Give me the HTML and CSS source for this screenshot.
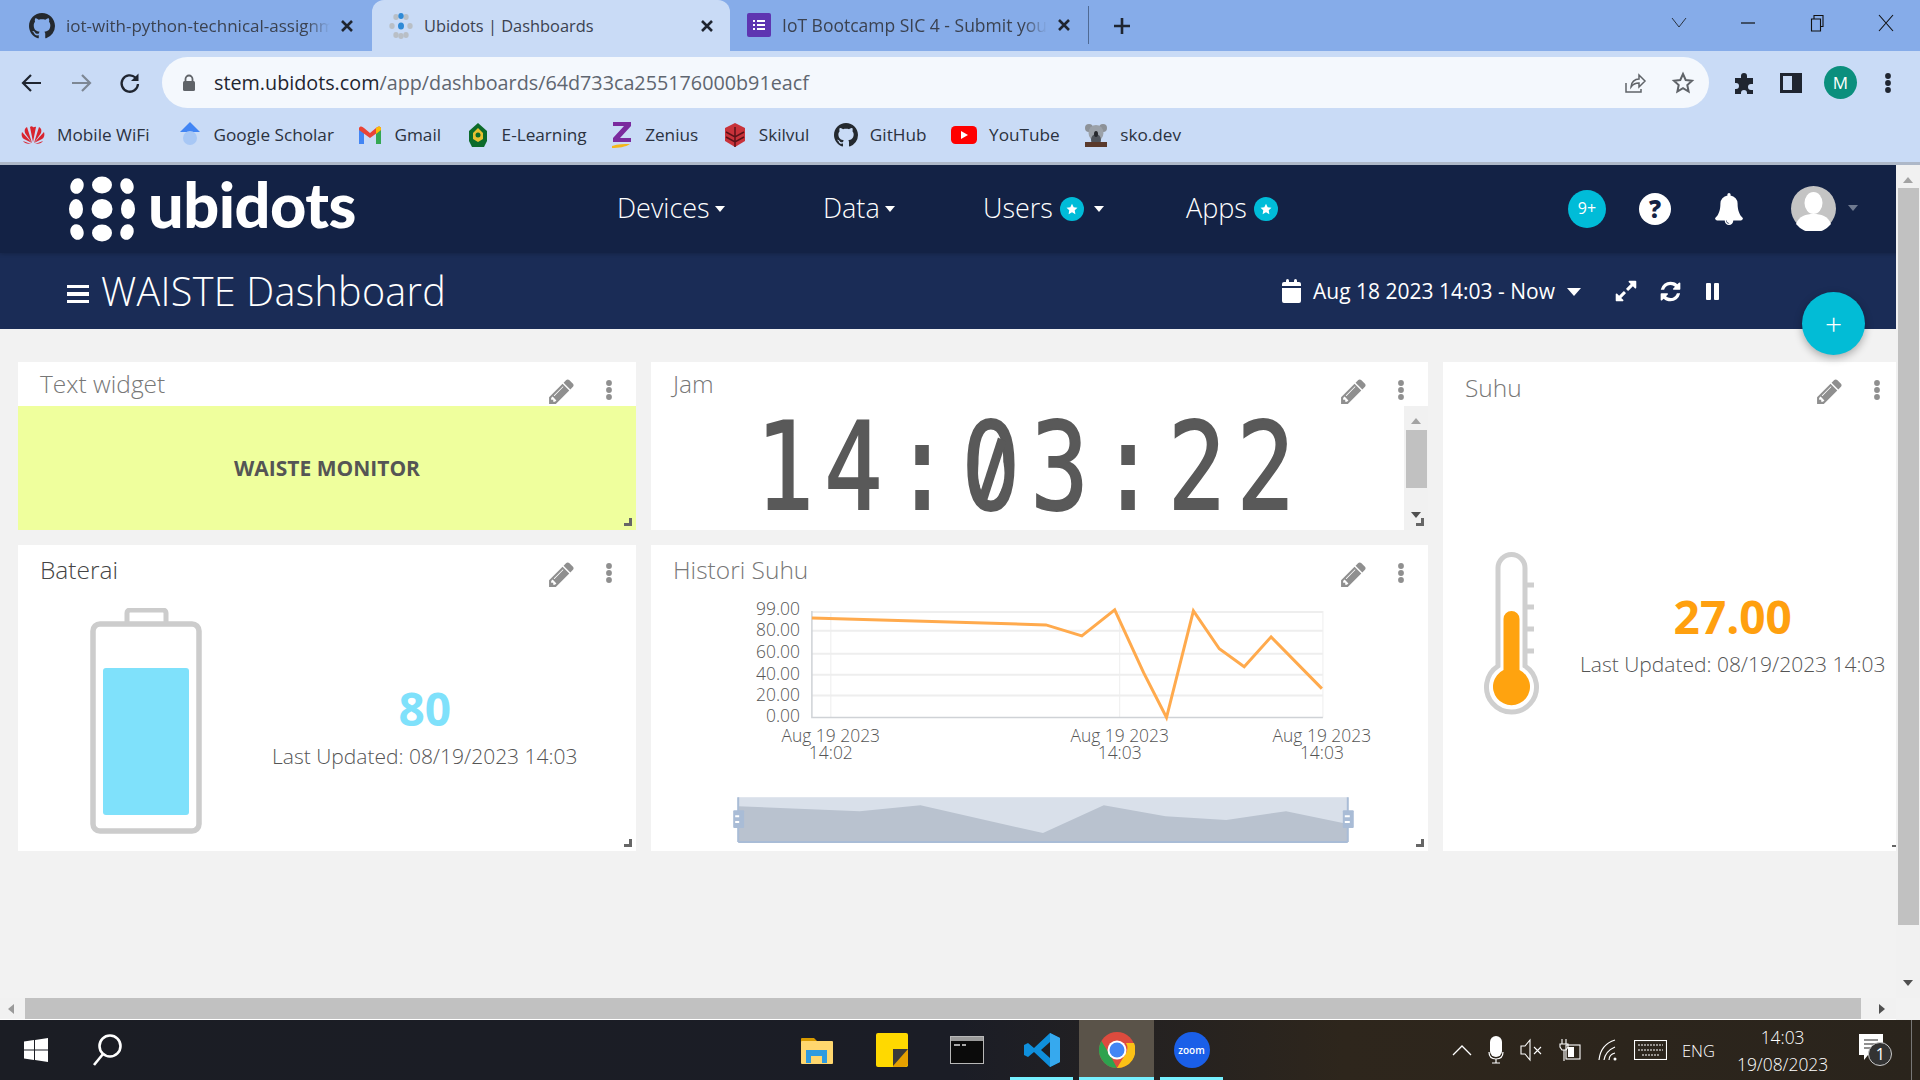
FILE: index.html
```html
<!DOCTYPE html>
<html lang="en">
<head>
    <meta charset="UTF-8">
    <title>Ubidots | Dashboards</title>
    <link rel="stylesheet" href="styles.css">
</head>
<body>
    <svg class="sprite" xmlns="http://www.w3.org/2000/svg">
        <symbol id="i-github" viewBox="0 0 16 16"><path d="M8 0C3.58 0 0 3.58 0 8c0 3.54 2.29 6.53 5.47 7.59.4.07.55-.17.55-.38 0-.19-.01-.82-.01-1.49-2.01.37-2.53-.49-2.69-.94-.09-.23-.48-.94-.82-1.13-.28-.15-.68-.52-.01-.53.63-.01 1.08.58 1.23.82.72 1.21 1.87.87 2.33.66.07-.52.28-.87.51-1.07-1.78-.2-3.64-.89-3.64-3.95 0-.87.31-1.59.82-2.15-.08-.2-.36-1.02.08-2.12 0 0 .67-.21 2.2.82.64-.18 1.32-.27 2-.27.68 0 1.36.09 2 .27 1.53-1.04 2.2-.82 2.2-.82.44 1.1.16 1.92.08 2.12.51.56.82 1.27.82 2.15 0 3.07-1.87 3.75-3.65 3.95.29.25.54.73.54 1.48 0 1.07-.01 1.93-.01 2.2 0 .21.15.46.55.38A8.013 8.013 0 0016 8c0-4.42-3.58-8-8-8z"/></symbol>
        <symbol id="i-pencil" viewBox="0 0 1792 1792"><path d="M491 1536l91-91-235-235-91 91v107h128v128h107zm523-928q0-22-22-22-10 0-17 7l-542 542q-7 7-7 17 0 22 22 22 10 0 17-7l542-542q7-7 7-17zm-54-192l416 416-832 832h-416v-416zm683 96q0 53-37 90l-166 166-416-416 166-165q36-38 90-38 53 0 91 38l235 234q37 39 37 91z"/></symbol>
        <symbol id="i-dots" viewBox="0 0 6 20"><circle cx="3" cy="3" r="2.9"/><circle cx="3" cy="10" r="2.9"/><circle cx="3" cy="17" r="2.9"/></symbol>
        <symbol id="i-close" viewBox="0 0 14 14"><path d="M2 2l10 10M12 2L2 12" fill="none" stroke="currentColor" stroke-width="2.6"/></symbol>
        <symbol id="i-star" viewBox="0 0 24 24"><path d="M12 4l2.5 5.2 5.7.8-4.1 4 1 5.700L12 17l-5.100 2.700 1-5.700-4.100-4 5.700-.8z"/></symbol>
    </svg>

    <header class="tabstrip">
        <div class="tab">
            <svg class="tab-icon" width="26" height="26"><use href="#i-github" fill="#24292f"/></svg>
            <span class="tab-title">iot-with-python-technical-assignment</span>
            <svg class="tab-close" width="14" height="14"><use href="#i-close"/></svg>
        </div>
        <div class="tab tab-active">
            <svg class="tab-icon" width="24" height="26" viewBox="0 0 24 26">
                <g fill="#b9bfc6"><ellipse cx="7" cy="4" rx="2.700" ry="3"/><ellipse cx="17" cy="4" rx="2.700" ry="3"/><ellipse cx="3" cy="13" rx="2.700" ry="3"/><ellipse cx="21" cy="13" rx="2.700" ry="3"/><ellipse cx="7" cy="22" rx="2.700" ry="3"/><ellipse cx="12" cy="23" rx="2.700" ry="3"/><ellipse cx="17" cy="22" rx="2.700" ry="3"/></g>
                <ellipse cx="12" cy="3" rx="2.700" ry="3" fill="#2f8ad6"/><ellipse cx="12" cy="13" rx="3" ry="3.500" fill="#2f8ad6"/>
            </svg>
            <span class="tab-title">Ubidots | Dashboards</span>
            <svg class="tab-close" width="14" height="14"><use href="#i-close"/></svg>
        </div>
        <div class="tab tab-last">
            <svg class="tab-icon" width="24" height="24" viewBox="0 0 24 24">
                <rect width="24" height="24" rx="2" fill="#5e35b1"/>
                <path d="M6 7h2v2H6zM10 7h8v2h-8zM6 11h2v2H6zM10 11h8v2h-8zM6 15h2v2H6zM10 15h8v2h-8z" fill="#fff"/>
            </svg>
            <span class="tab-title">IoT Bootcamp SIC 4 - Submit your assignment</span>
            <svg class="tab-close" width="14" height="14"><use href="#i-close"/></svg>
        </div>
        <div class="tab-new">
            <svg width="20" height="20" viewBox="0 0 20 20"><path d="M10 2v16M2 10h16" stroke="#1f2530" stroke-width="2.600"/></svg>
        </div>
        <div class="window-controls">
            <svg width="18" height="12" viewBox="0 0 18 12"><path d="M2 1l7 9 7-9" fill="none" stroke="#2a3340" stroke-width="1"/></svg>
            <svg width="18" height="12" viewBox="0 0 18 12"><path d="M2 6h14" stroke="#111" stroke-width="1.200"/></svg>
            <svg width="18" height="18" viewBox="0 0 18 18"><path d="M3.500 5h9v12h-9zM6 5V1.500h9v11h-2.500" fill="none" stroke="#111" stroke-width="1.100"/></svg>
            <svg width="18" height="18" viewBox="0 0 18 18"><path d="M2 1l14 16M16 1L2 17" fill="none" stroke="#111" stroke-width="1.100"/></svg>
        </div>
    </header>

    <div class="toolbar">
        <svg class="tool-btn" width="24" height="24" viewBox="0 0 24 24"><path d="M21 12H4M11 4l-8 8 8 8" fill="none" stroke="#1f2530" stroke-width="2.200"/></svg>
        <svg class="tool-btn" width="24" height="24" viewBox="0 0 24 24"><path d="M3 12h17M13 4l8 8-8 8" fill="none" stroke="#7d8794" stroke-width="2.200"/></svg>
        <svg class="tool-btn" width="24" height="24" viewBox="0 0 24 24"><path d="M20 13a8.200 8.200 0 1 1-2.600-6.500" fill="none" stroke="#1f2530" stroke-width="2.300"/><path d="M20.500 2.500v7.500h-7.500z" fill="#1f2530"/></svg>
        <div class="omnibox">
            <svg width="14" height="18" viewBox="0 0 14 18"><path d="M3.500 8V5a3.500 3.500 0 0 1 7 0v3" fill="none" stroke="#5f6368" stroke-width="1.800"/><rect x="1" y="7" width="12" height="10" rx="1.500" fill="#5f6368"/></svg>
            <span class="url"><b>stem.ubidots.com</b>/app/dashboards/64d733ca255176000b91eacf</span>
            <svg class="omni-share" width="24" height="24" viewBox="0 0 24 24"><path d="M3 12v9h15v-3M8 16c0-5 4-8 8-8V4l6 6-6 6v-4c-3 0-6 1-8 4z" fill="none" stroke="#5f6368" stroke-width="1.500"/></svg>
            <svg width="24" height="24" viewBox="0 0 24 24"><path d="M12 3l2.700 6 6.300.7-4.700 4.300 1.300 6.500L12 17.200 6.400 20.500 7.700 14 3 9.700 9.300 9z" fill="none" stroke="#5f6368" stroke-width="2"/></svg>
        </div>
        <div class="toolbar-end">
            <svg width="24" height="24" viewBox="0 0 24 24"><path d="M2 7h6V5a3 3 0 0 1 6 0v2h6v6h-2a3 3 0 0 0 0 6h2v4h-6v-1a3 3 0 0 0-6 0v1H2v-5h1a3 3 0 0 0 0-6H2z" fill="#1f2530"/></svg>
            <svg class="panel-icon" width="22" height="20" viewBox="0 0 22 20"><path d="M1.500 1.500h19v17h-19z" fill="none" stroke="#1f2530" stroke-width="3"/><rect x="12" y="1" width="9" height="18" fill="#1f2530"/></svg>
            <span class="profile">M</span>
            <svg width="6" height="20" viewBox="0 0 6 20"><use href="#i-dots" fill="#1f2530"/></svg>
        </div>
    </div>

    <nav class="bookmarks">
        <a class="bm">
            <svg width="24" height="20" viewBox="0 0 24 20"><g fill="#d9232e"><path d="M11 18L6 2c-2 1-3 3-2 6z"/><path d="M13 18l5-16c2 1 3 3 2 6z"/><path d="M11 18L1 7c-1 3 0 6 2 7z"/><path d="M13 18l10-11c1 3 0 6-2 7z"/><path d="M10 19l-8-3c1 2 4 3 8 3z"/><path d="M14 19l8-3c-1 2-4 3-8 3z"/><path d="M12 17L9 2c1-1 2-1 3 0s2-1 3 0z"/></g></svg>
            Mobile WiFi
        </a>
        <a class="bm">
            <svg width="24" height="28" viewBox="0 0 24 28"><path d="M12 1L22 11H2z" fill="#4285f4"/><circle cx="12" cy="17" r="7" fill="#a7c7f5"/></svg>
            Google Scholar
        </a>
        <a class="bm">
            <svg width="24" height="20" viewBox="0 0 24 20"><path d="M1 19V3l5 4v12z" fill="#4285f4"/><path d="M23 19V3l-5 4v12z" fill="#34a853"/><path d="M1 3c1-2 3-2 5 0l6 5 6-5c2-2 4-2 5 0v2l-11 8L1 5z" fill="#ea4335"/><path d="M18 3c2-2 4-2 5 0v2l-5 4z" fill="#fbbc04"/></svg>
            Gmail
        </a>
        <a class="bm">
            <svg width="24" height="26" viewBox="0 0 24 26"><path d="M12 1l9 8v10l-3 6H6l-3-6V9z" fill="#0c6b2a"/><path d="M12 6l5 5v6l-5 3-5-3v-6z" fill="#e8c030"/><circle cx="12" cy="13" r="2.500" fill="#0c6b2a"/></svg>
            E-Learning
        </a>
        <a class="bm">
            <svg width="22" height="28" viewBox="0 0 22 28"><path d="M2 1h18v4L9 17h11v4H2v-4L13 5H2z" fill="#7b2a9e"/><path d="M1 25c6-2 12-2 18-2-4 3-12 4-18 4z" fill="#f5b61a"/></svg>
            Zenius
        </a>
        <a class="bm">
            <svg width="24" height="26" viewBox="0 0 24 26"><path d="M12 1l10 5v13l-10 6-10-6V6z" fill="#c8323a"/><path d="M3 10l9 5 9-5M3 15l9 5 9-5M12 5v20" fill="none" stroke="#5b1218" stroke-width="1.500"/></svg>
            Skilvul
        </a>
        <a class="bm">
            <svg width="24" height="24"><use href="#i-github" fill="#24292f"/></svg>
            GitHub
        </a>
        <a class="bm">
            <svg width="26" height="18" viewBox="0 0 26 18"><rect width="26" height="18" rx="4.500" fill="#f00"/><path d="M10 5l7 4-7 4z" fill="#fff"/></svg>
            YouTube
        </a>
        <a class="bm">
            <svg width="24" height="26" viewBox="0 0 24 26"><circle cx="5" cy="6" r="4" fill="#8d9298"/><circle cx="19" cy="6" r="4" fill="#8d9298"/><ellipse cx="12" cy="11" rx="7.500" ry="8" fill="#9ba1a8"/><ellipse cx="12" cy="18" rx="5" ry="6" fill="#50555c"/><rect x="1" y="20" width="22" height="5" fill="#5a3a2c"/><ellipse cx="12" cy="12" rx="2" ry="3" fill="#26282c"/></svg>
            sko.dev
        </a>
    </nav>

    <div class="viewport">
        <div class="page">
            <div class="topnav">
                <div class="brand">
                    <svg width="66" height="66" viewBox="0 0 66 66" fill="#fff">
                        <ellipse cx="8" cy="10" rx="6.500" ry="8" transform="rotate(20 8 10)"/><ellipse cx="33" cy="9" rx="10" ry="8.500"/><ellipse cx="58" cy="10" rx="6.500" ry="8" transform="rotate(-20 58 10)"/>
                        <ellipse cx="7" cy="33" rx="7" ry="10"/><ellipse cx="33" cy="33" rx="10.500" ry="10"/><ellipse cx="59" cy="33" rx="7" ry="10"/>
                        <ellipse cx="8" cy="56" rx="6.500" ry="8" transform="rotate(-20 8 56)"/><ellipse cx="33" cy="57" rx="10" ry="8.500"/><ellipse cx="58" cy="56" rx="6.500" ry="8" transform="rotate(20 58 56)"/>
                    </svg>
                    <span class="brand-name">ubidots</span>
                </div>
                <ul class="menu">
                    <li>Devices<i class="caret"></i></li>
                    <li>Data<i class="caret"></i></li>
                    <li>Users<span class="star"><svg width="16" height="16"><use href="#i-star" fill="#fff"/></svg></span><i class="caret caret-far"></i></li>
                    <li>Apps<span class="star"><svg width="16" height="16"><use href="#i-star" fill="#fff"/></svg></span></li>
                </ul>
                <div class="nav-right">
                    <span class="notif-count">9+</span>
                    <span class="help">?</span>
                    <svg class="bell" width="30" height="32" viewBox="0 0 1792 1792" preserveAspectRatio="none"><path fill="#fff" d="M912 1696q0-16-16-16-59 0-101.500-42.500t-42.500-101.500q0-16-16-16t-16 16q0 73 51.500 124.500t124.500 51.500q16 0 16-16zm816-288q0 52-38 90t-90 38h-448q0 106-75 181t-181 75-181-75-75-181h-448q-52 0-90-38t-38-90q50-42 91-88t85-119.500 74.500-158.500 50-206 19.500-260q0-152 117-282.500t307-158.500q-8-19-8-39 0-40 28-68t68-28 68 28 28 68q0 20-8 39 190 28 307 158.500t117 282.500q0 139 19.500 260t50 206 74.500 158.500 85 119.500 91 88z"/></svg>
                    <span class="user">
                        <svg width="45" height="45" viewBox="0 0 45 45"><circle cx="22.500" cy="22.500" r="22.500" fill="#c4c4c4"/><ellipse cx="22.500" cy="17" rx="9" ry="11" fill="#fff"/><path d="M5 38c3-8 10-10 17.500-10S37 30 40 38a22.500 22.500 0 0 1-35 0z" fill="#fff"/></svg>
                        <i class="caret caret-grey"></i>
                    </span>
                </div>
            </div>

            <div class="subnav">
                <div class="burger"><i></i><i></i><i></i></div>
                <h1 class="dash-title">WAISTE Dashboard</h1>
                <div class="dash-tools">
                    <svg class="cal" width="19" height="24" viewBox="0 0 19 24"><path d="M0 5a2 2 0 0 1 2-2h15a2 2 0 0 1 2 2v2H0zM0 9h19v13a2 2 0 0 1-2 2H2a2 2 0 0 1-2-2z" fill="#fff"/><rect x="4" y="0" width="3" height="6" rx="1.500" fill="#fff"/><rect x="12" y="0" width="3" height="6" rx="1.500" fill="#fff"/></svg>
                    <span class="range">Aug 18 2023 14:03 - Now</span>
                    <i class="caret caret-big"></i>
                    <svg class="t-expand" width="24" height="24" viewBox="0 0 1792 1792"><path fill="#fff" d="M883 1056q0 13-10 23l-332 332 144 144q19 19 19 45t-19 45-45 19h-448q-26 0-45-19t-19-45v-448q0-26 19-45t45-19 45 19l144 144 332-332q10-10 23-10t23 10l114 114q10 10 10 23zm781-864v448q0 26-19 45t-45 19-45-19l-144-144-332 332q-10 10-23 10t-23-10l-114-114q-10-10-10-23t10-23l332-332-144-144q-19-19-19-45t19-45 45-19h448q26 0 45 19t19 45z"/></svg>
                    <svg class="t-refresh" width="23" height="23" viewBox="0 0 1792 1792"><path fill="#fff" d="M1639 1056q0 5-1 7-64 268-268 434.500t-478 166.500q-146 0-282.500-55t-243.500-157l-129 129q-19 19-45 19t-45-19-19-45v-448q0-26 19-45t45-19h448q26 0 45 19t19 45-19 45l-137 137q71 66 161 102t187 36q134 0 250-65t186-179q11-17 53-117 8-23 30-23h192q13 0 22.500 9.500t9.500 22.500zm25-800v448q0 26-19 45t-45 19h-448q-26 0-45-19t-19-45 19-45l138-138q-148-137-349-137-134 0-250 65t-186 179q-11 17-53 117-8 23-30 23h-199q-13 0-22.500-9.500t-9.500-22.500v-7q65-268 270-434.500t480-166.500q146 0 284 55.500t245 156.500l130-129q19-19 45-19t45 19 19 45z"/></svg>
                    <span class="t-pause"><i></i><i></i></span>
                </div>
            </div>

            <button class="fab">+</button>

            <main class="board">
                <section class="card card-text">
                    <div class="card-head">
                        <h2 class="card-title">Text widget</h2>
                        <svg class="act-pencil" width="29" height="29"><use href="#i-pencil"/></svg>
                        <svg class="act-dots" width="6" height="20"><use href="#i-dots"/></svg>
                    </div>
                    <div class="text-body">WAISTE MONITOR</div>
                    <i class="resize"></i>
                </section>

                <section class="card card-clock">
                    <div class="card-head">
                        <h2 class="card-title">Jam</h2>
                        <svg class="act-pencil" width="29" height="29"><use href="#i-pencil"/></svg>
                        <svg class="act-dots" width="6" height="20"><use href="#i-dots"/></svg>
                    </div>
                    <div class="clock-body">
                        <div class="clock"><span class="clock-digits">14:<span class="zero">0</span>3:22</span></div>
                        <div class="mini-scroll">
                            <i class="arrow-up"></i>
                            <i class="mini-thumb"></i>
                            <i class="arrow-down"></i>
                        </div>
                    </div>
                    <i class="resize"></i>
                </section>

                <section class="card card-temp">
                    <div class="card-head card-head-low">
                        <h2 class="card-title">Suhu</h2>
                        <svg class="act-pencil" width="29" height="29"><use href="#i-pencil"/></svg>
                        <svg class="act-dots" width="6" height="20"><use href="#i-dots"/></svg>
                    </div>
                    <div class="metric metric-temp">
                        <svg width="58" height="168" viewBox="0 0 58 168">
                            <path d="M15 118V20a13.500 13.500 0 0 1 27 0v98a25 25 0 1 1-27 0z" fill="#fff" stroke="#cfcfcf" stroke-width="5"/>
                            <path d="M43 37h8M43 59h8M43 81h8M43 103h8" stroke="#cfcfcf" stroke-width="5"/>
                            <path d="M20.500 122V71a8 8 0 0 1 16 0v51a18.500 18.500 0 1 1-16 0z" fill="#ffa30f"/>
                        </svg>
                        <div class="reading">
                            <div class="value value-orange">27.00</div>
                            <div class="updated">Last Updated: 08/19/2023 14:03</div>
                        </div>
                    </div>
                    <i class="resize resize-small"></i>
                </section>

                <section class="card card-battery">
                    <div class="card-head">
                        <h2 class="card-title card-title-dark">Baterai</h2>
                        <svg class="act-pencil" width="29" height="29"><use href="#i-pencil"/></svg>
                        <svg class="act-dots" width="6" height="20"><use href="#i-dots"/></svg>
                    </div>
                    <div class="metric metric-battery">
                        <svg width="112" height="226" viewBox="0 0 112 226">
                            <path d="M37 16V5a3 3 0 0 1 3-3h33a3 3 0 0 1 3 3v11" fill="none" stroke="#ccc" stroke-width="5"/>
                            <rect x="3" y="16" width="106" height="207" rx="7" fill="#fff" stroke="#ccc" stroke-width="5.500"/>
                            <rect x="13" y="60" width="86" height="147" rx="3" fill="#7fe1fb"/>
                        </svg>
                        <div class="reading">
                            <div class="value value-blue">80</div>
                            <div class="updated">Last Updated: 08/19/2023 14:03</div>
                        </div>
                    </div>
                    <i class="resize"></i>
                </section>

                <section class="card card-chart">
                    <div class="card-head">
                        <h2 class="card-title">Histori Suhu</h2>
                        <svg class="act-pencil" width="29" height="29"><use href="#i-pencil"/></svg>
                        <svg class="act-dots" width="6" height="20"><use href="#i-dots"/></svg>
                    </div>
                    <svg class="chart" width="776" height="256" viewBox="651 595 776 256">
                        <g stroke="#eeeeee" stroke-width="2">
                            <path d="M811 611h513M811 630h513M811 653h513M811 674h513M811 695h513"/>
                            <path d="M830 610v107M1120 610v107M1324 610v107" stroke-width="1"/>
                        </g>
                        <path d="M811 610v107h513" fill="none" stroke="#cfd2d6" stroke-width="1.500"/>
                        <g class="axis-y" text-anchor="end">
                            <text x="799" y="614">99.00</text>
                            <text x="799" y="635">80.00</text>
                            <text x="799" y="657">60.00</text>
                            <text x="799" y="679">40.00</text>
                            <text x="799" y="700">20.00</text>
                            <text x="799" y="722">0.00</text>
                        </g>
                        <g class="axis-x" text-anchor="middle">
                            <text x="830" y="742">Aug 19 2023</text><text x="830" y="759">14:02</text>
                            <text x="1120" y="742">Aug 19 2023</text><text x="1120" y="759">14:03</text>
                            <text x="1323" y="742">Aug 19 2023</text><text x="1323" y="759">14:03</text>
                        </g>
                        <polyline points="811,617 1046,624 1082,635 1115,609 1144,672 1167,717 1194,610 1220,648 1245,666 1272,636 1323,688" fill="none" stroke="#ffaa4d" stroke-width="3"/>
                        <rect x="737" y="797" width="612" height="45" fill="#d9e0ea"/>
                        <polygon points="737,806 859,811 920,805 1043,833 1104,805 1166,816 1227,820 1287,811 1349,824 1349,841 737,841" fill="#b9c2cf"/>
                        <path d="M737 797v45M1349 797v45M737 842h612" stroke="#a9bcd6" stroke-width="2" fill="none"/>
                        <g>
                            <rect x="732" y="810" width="11" height="18" rx="1" fill="#a9bcd6"/><path d="M734 816h4M734 822h4" stroke="#fff" stroke-width="2"/>
                            <rect x="1344" y="810" width="11" height="18" rx="1" fill="#a9bcd6"/><path d="M1346 816h5M1346 822h5" stroke="#fff" stroke-width="2"/>
                        </g>
                    </svg>
                    <i class="resize"></i>
                </section>
            </main>
        </div>

        <div class="vscroll">
            <i class="arrow-up"></i>
            <i class="vthumb"></i>
            <i class="arrow-down"></i>
        </div>
        <div class="hscroll">
            <i class="arrow-left"></i>
            <i class="hthumb"></i>
            <i class="arrow-right"></i>
        </div>
    </div>

    <footer class="taskbar">
        <div class="task-start">
            <svg width="24" height="24" viewBox="0 0 24 24" fill="#fff"><path d="M0 3.500l10-1.400v9.400H0zM11 2l13-2v11.500H11zM0 12.500h10v9.400L0 20.500zM11 12.500h13V24l-13-2z"/></svg>
            <svg width="32" height="34" viewBox="0 0 32 34"><circle cx="19" cy="13" r="10.500" fill="none" stroke="#fff" stroke-width="2.600"/><path d="M12 21L3 32" stroke="#fff" stroke-width="2.600"/></svg>
        </div>
        <div class="task-apps">
            <span class="app">
                <svg width="32" height="28" viewBox="0 0 32 28"><path d="M0 3a1 1 0 0 1 1-1h12l3 3v4H0z" fill="#d89a00"/><rect y="5" width="32" height="23" rx="1" fill="#ffd76e"/><path d="M5 27V14h21v13h-5v-7h-11v7z" fill="#2f9be0"/></svg>
            </span>
            <span class="app">
                <svg width="32" height="34" viewBox="0 0 32 34"><rect width="32" height="34" rx="2" fill="#ffd900"/><path d="M17 16h15v14a4 4 0 0 1-4 4H17z" fill="#e5a000"/><path d="M17 33V16h15z" fill="#3a3a3a"/></svg>
            </span>
            <span class="app">
                <svg width="34" height="28" viewBox="0 0 34 28"><rect x=".5" y=".5" width="33" height="27" fill="#0b0b0b" stroke="#b8b8b8"/><rect x="1" y="1" width="32" height="4" fill="#9a9a9a"/><path d="M4 9h6M12 9h4" stroke="#ddd" stroke-width="1.500"/></svg>
            </span>
            <span class="app app-open">
                <svg width="36" height="36" viewBox="0 0 36 36"><path d="M26 1l10 5v24l-10 5-16-15-6 5-4-2V13l4-2 6 5zM26 10l-9 8 9 8z" fill="#0f8fdc"/><path d="M26 1l10 5v24l-10 5z" fill="#36a9ee"/></svg>
            </span>
            <span class="app app-open app-active">
                <svg width="36" height="36" viewBox="0 0 36 36"><circle cx="18" cy="18" r="18" fill="#dd4b3e"/><path d="M18 36A18 18 0 0 1 2.400 9L11 23z" fill="#2ea24f"/><path d="M18 36l9-15a10 10 0 0 0 0-10h8a18 18 0 0 1-17 25z" fill="#fbc116"/><circle cx="18" cy="18" r="9.500" fill="#fff"/><circle cx="18" cy="18" r="7.500" fill="#4285f4"/></svg>
            </span>
            <span class="app app-open">
                <span class="zoom-badge">zoom</span>
            </span>
        </div>
        <div class="tray">
            <svg class="tray-chevron" width="20" height="12" viewBox="0 0 20 12"><path d="M1 11l9-9 9 9" fill="none" stroke="#fff" stroke-width="1.300"/></svg>
            <svg width="16" height="28" viewBox="0 0 16 28"><rect x="2" y="0" width="12" height="21" rx="6" fill="#fff"/><path d="M1 16c0 5 3 7 7 7s7-2 7-7M8 23v4M4 27h8" fill="none" stroke="#fff" stroke-width="1.200"/></svg>
            <svg width="22" height="24" viewBox="0 0 22 24"><path d="M1 8h4l5-6v20l-5-6H1zM14 9l7 7M21 9l-7 7" fill="none" stroke="#fff" stroke-width="1.100"/></svg>
            <svg width="24" height="22" viewBox="0 0 24 22"><path d="M4 0v5M8 0v5M2 5h8v3l-2 3H4L2 8zM6 11v11" fill="none" stroke="#fff" stroke-width="1.100"/><rect x="8" y="6" width="14" height="14" fill="none" stroke="#fff" stroke-width="1.100"/><rect x="10" y="8" width="6" height="10" fill="#fff"/></svg>
            <svg width="20" height="22" viewBox="0 0 20 22"><path d="M1 21C2 12 7 4 17 1M6 21c1-6 4-10 11-13M11 21c0-3 2-6 6-7" fill="none" stroke="#fff" stroke-width="1.200"/><circle cx="17" cy="20" r="1.500" fill="#fff"/></svg>
            <svg width="33" height="20" viewBox="0 0 33 20"><rect x=".5" y=".5" width="32" height="19" fill="none" stroke="#fff" stroke-width="1.100"/><path d="M4 5h25M4 10h25M8 15h17" stroke="#fff" stroke-width="1.100" stroke-dasharray="2 1"/></svg>
            <span class="lang">ENG</span>
            <span class="clock-tray"><span>14:03</span><span>19/08/2023</span></span>
            <span class="action-center">
                <svg width="26" height="30" viewBox="0 0 26 30"><path d="M1 1h24v21H10l-4 5v-5H1z" fill="#fff"/><path d="M6 7h14M6 11h14M6 15h14" stroke="#222" stroke-width="1.200"/></svg>
                <span class="action-count">1</span>
            </span>
        </div>
    </footer>
</body>
</html>
```

FILE: styles.css
```css
* {
    box-sizing: border-box;
}

html, body {
    margin: 0;
    height: 1080px;
    overflow: hidden;
}

body {
    width: 1920px;
    display: flex;
    flex-direction: column;
    font-family: "Open Sans", "Liberation Sans", sans-serif;
    background: #f2f2f2;
}

.sprite {
    display: none;
}

i {
    display: block;
}

/* browser chrome */

.tabstrip {
    height: 51px;
    flex: none;
    display: flex;
    background: #86ace9;
    position: relative;
}

.tab {
    width: 372px;
    display: flex;
    align-items: center;
    padding: 0 18px 0 29px;
    color: #1f2530;
    font-size: 17px;
}

.tab-active {
    width: 358px;
    padding: 0 16px 0 17px;
    background: #c9dbf6;
    border-radius: 12px 12px 0 0;
    font-size: 16.400px;
}

.tab-last {
    width: 359px;
    padding: 0 17px 0 17px;
    border-right: 1px solid #4f6a94;
    margin: 6px 0 7px;
    height: 38px;
    font-size: 17.500px;
}

.tab-icon {
    flex: none;
    margin-right: 11px;
}

.tab-title {
    flex: 1;
    overflow: hidden;
    white-space: nowrap;
    color: #3b4250;
    -webkit-mask-image: linear-gradient(to left, transparent 0, #000 24px);
    mask-image: linear-gradient(to left, transparent 0, #000 24px);
}

.tab-active .tab-title {
    -webkit-mask-image: none;
    mask-image: none;
}

.tab-close {
    flex: none;
    margin-left: 10px;
    color: #1f2530;
}

.tab-new {
    width: 66px;
    display: flex;
    align-items: center;
    justify-content: center;
}

.window-controls {
    margin-left: auto;
    width: 260px;
    display: flex;
    align-items: center;
    justify-content: space-between;
    padding: 0 25px 6px 10px;
}

.toolbar {
    height: 57px;
    flex: none;
    display: flex;
    align-items: center;
    padding: 6px 0 0 20px;
    background: #c9dbf6;
}

.tool-btn {
    flex: none;
    margin-right: 25px;
}

.tool-btn:nth-child(3) {
    margin-right: 21px;
}

.omnibox {
    width: 1547px;
    height: 51px;
    display: flex;
    align-items: center;
    padding: 0 14px 0 20px;
    gap: 32px;
    background: #f4f8fd;
    border-radius: 26px;
    margin-left: -1px;
}

.url {
    flex: 1;
    margin-left: -14px;
    font-size: 19.750px;
    color: #5f6670;
    white-space: nowrap;
}

.url b {
    font-weight: 400;
    color: #1f2530;
}

.omni-share {
    margin-right: -8px;
}

.toolbar-end {
    flex: 1;
    display: flex;
    align-items: center;
    padding-left: 24px;
    gap: 28px;
}

.panel-icon {
    margin-left: -5px;
}

.profile {
    width: 33px;
    height: 33px;
    margin: 0 0 0 -6px;
    border-radius: 50%;
    background: #0b8f7d;
    color: #fff;
    font-size: 17px;
    line-height: 33px;
    text-align: center;
}

.bookmarks {
    height: 57px;
    flex: none;
    display: flex;
    align-items: center;
    padding: 0 0 1px 21px;
    background: #c9dbf6;
    border-bottom: 3px solid #aeb8c8;
}

.bm {
    display: flex;
    align-items: center;
    gap: 12px;
    font-size: 17.200px;
    color: #2b3240;
    white-space: nowrap;
    margin-right: 24.500px;
}

.bm:first-child {
    margin-right: 28px;
}

/* ubidots page */

.viewport {
    flex: 1;
    position: relative;
    overflow: hidden;
}

.page {
    height: 100%;
    background: #f2f2f2;
    position: relative;
}

.topnav {
    height: 88px;
    display: flex;
    align-items: center;
    background: #132245;
    box-shadow: 0 1px 4px rgba(0, 0, 0, 0.2);
    position: relative;
    color: #fff;
    padding-left: 69px;
}

.brand {
    width: 548px;
    display: flex;
    align-items: center;
    gap: 13px;
}

.brand-name {
    font-family: Lato, "Open Sans", sans-serif;
    font-size: 63px;
    font-weight: 900;
    line-height: 60px;
    letter-spacing: -0.5px;
    margin-top: -11px;
}

.menu {
    list-style: none;
    margin: -4px 0 0;
    padding: 0;
    display: grid;
    grid-template-columns: 206px 160px 203px 110px;
    font-size: 27px;
    font-weight: 300;
}

.menu li {
    display: flex;
    align-items: center;
}

.caret {
    width: 0;
    height: 0;
    margin: 4px 0 0 5px;
    border-left: 5px solid transparent;
    border-right: 5px solid transparent;
    border-top: 6px solid #fff;
}

.caret-far {
    margin-left: 10px;
}

.caret-grey {
    border-top-color: #6f7a90;
    margin: 0;
}

.caret-big {
    margin: 2px 0 0 12px;
    border-left-width: 7px;
    border-right-width: 7px;
    border-top-width: 8px;
}

.star {
    width: 24px;
    height: 24px;
    margin-left: 7px;
    margin-top: 3px;
    border-radius: 50%;
    background: #00bcd8;
    display: flex;
    align-items: center;
    justify-content: center;
}

.nav-right {
    position: absolute;
    left: 1568px;
    top: 21px;
    display: flex;
    align-items: center;
    gap: 32px;
    height: 46px;
}

.notif-count {
    width: 38px;
    height: 38px;
    border-radius: 50%;
    background: #00bcd8;
    font-size: 16px;
    line-height: 36px;
    text-align: center;
}

.help {
    width: 32px;
    height: 32px;
    margin-left: 1px;
    border-radius: 50%;
    background: #fff;
    color: #132245;
    font-size: 24px;
    font-weight: 800;
    line-height: 32px;
    text-align: center;
}

.bell {
    margin-left: 11px;
}

.user {
    display: flex;
    align-items: center;
    gap: 12px;
    margin: -2px 0 0 15px;
}

.subnav {
    height: 76px;
    display: flex;
    align-items: center;
    background: #1a2c56;
    color: #fff;
    padding: 0 201px 0 67px;
}

.burger {
    width: 22px;
    display: flex;
    flex-direction: column;
    gap: 4px;
    margin: 6px 12px 0 0;
}

.burger i {
    height: 3.500px;
    background: #fff;
}

.dash-title {
    margin: 0;
    font-size: 39.500px;
    font-weight: 300;
    letter-spacing: 0.3px;
}

.dash-tools {
    margin-left: auto;
    display: flex;
    align-items: center;
}

.range {
    margin-left: 12px;
    font-size: 21px;
}

.t-expand {
    margin-left: 33px;
}

.t-refresh {
    margin-left: 21px;
}

.t-pause {
    margin-left: 24px;
    display: flex;
    gap: 3px;
}

.t-pause i {
    width: 5px;
    height: 17px;
    background: #fff;
    border-radius: 1px;
}

.fab {
    position: absolute;
    left: 1802px;
    top: 127px;
    z-index: 3;
    width: 63px;
    height: 63px;
    border: 0;
    border-radius: 50%;
    background: #02bcd6;
    color: #fff;
    font: 300 30px/60px "Open Sans", sans-serif;
    padding: 0;
    box-shadow: 0 3px 8px rgba(0, 0, 0, 0.3);
}

.board {
    display: grid;
    grid-template-columns: 618px 777px 453px;
    grid-template-rows: 168px 306px;
    gap: 15px;
    padding: 33px 0 0 18px;
}

.card {
    background: #fff;
    position: relative;
    display: flex;
    flex-direction: column;
}

.card-temp {
    grid-column: 3;
    grid-row: 1 / span 2;
}

.card-battery {
    grid-column: 1;
    grid-row: 2;
}

.card-chart {
    grid-column: 2;
    grid-row: 2;
}

.card-head {
    height: 44px;
    flex: none;
    display: flex;
    align-items: flex-start;
    padding: 6px 24px 0 22px;
}

.card-head-low {
    padding-right: 16px;
}

.card-title {
    margin: 0 auto 0 0;
    font-size: 24.500px;
    font-weight: 300;
    line-height: 32px;
    color: #777;
}

.card-head-low .card-title,
.card-battery .card-title,
.card-chart .card-title {
    margin-top: 3px;
}

.card-head-low .card-title {
    margin-top: 4px;
}

.card-title-dark {
    color: #444;
}

.act-pencil {
    fill: #8f8f8f;
    margin: 9px 30px 0 0;
}

.act-dots {
    fill: #8f8f8f;
    margin-top: 12px;
}

.text-body {
    flex: 1;
    display: flex;
    align-items: center;
    justify-content: center;
    background: #efff9d;
    color: #555;
    font-size: 21px;
    font-weight: 700;
}

.resize {
    position: absolute;
    right: 4px;
    bottom: 4px;
    width: 8px;
    height: 8px;
    border-right: 3px solid #666;
    border-bottom: 3px solid #666;
}

.resize-small {
    width: 4px;
    height: 3px;
    border-width: 0 0 2px 3px;
    right: 0;
}

.clock-body {
    flex: 1;
    display: flex;
    min-height: 0;
}

.clock {
    flex: 1;
    display: flex;
    align-items: center;
    justify-content: center;
    color: #595959;
    font-family: "DejaVu Sans Mono", monospace;
}

.clock-digits {
    display: block;
    font-size: 121px;
    line-height: 124px;
    letter-spacing: 13px;
    -webkit-text-stroke: 2px #595959;
    transform: scaleX(0.8);
    margin-left: 6px;
}

.zero {
    display: inline-block;
    position: relative;
}

/* dejavu dots its zero, the reference slashes it */
.zero::before {
    content: "";
    position: absolute;
    left: 20px;
    top: 42px;
    width: 33px;
    height: 50px;
    background: #fff;
    border-radius: 50%;
}

.zero::after {
    content: "";
    position: absolute;
    left: 31px;
    top: 31px;
    width: 11px;
    height: 72px;
    background: #595959;
    transform: rotate(22deg);
}

.mini-scroll {
    width: 24px;
    flex: none;
    background: #f1f1f1;
    display: flex;
    flex-direction: column;
    align-items: center;
}

.mini-thumb {
    width: 21px;
    height: 58px;
    background: #c1c1c1;
    margin: 6px 0 auto;
}

.arrow-up {
    width: 0;
    height: 0;
    margin-top: 12px;
    border-left: 5px solid transparent;
    border-right: 5px solid transparent;
    border-bottom: 6px solid #a3a3a3;
}

.arrow-down {
    width: 0;
    height: 0;
    margin-bottom: 12px;
    border-left: 5px solid transparent;
    border-right: 5px solid transparent;
    border-top: 6px solid #505050;
}

.metric {
    flex: 1;
    display: flex;
    align-items: center;
}

.metric-battery {
    padding: 1px 0 0 72px;
    gap: 70px;
}

.metric-temp {
    padding: 6px 0 0 40px;
    gap: 39px;
}

.metric-temp svg,
.metric-battery svg {
    flex: none;
}

.metric-battery .reading {
    margin-top: 10px;
}

.metric-temp .reading {
    margin-top: 5px;
}

.reading {
    text-align: center;
    white-space: nowrap;
}

.value {
    font-weight: 700;
    font-size: 46px;
    line-height: 54px;
}

.value-blue {
    color: #7fe1fb;
}

.value-orange {
    color: #ffa00f;
}

.updated {
    font-size: 21px;
    font-weight: 300;
    color: #555;
    margin-top: 6px;
    line-height: 30px;
}

.chart {
    display: block;
    margin-top: 7px;
}

.chart text {
    font-family: "Open Sans", sans-serif;
    font-weight: 300;
    fill: #555;
    font-size: 17.500px;
}

.vscroll {
    position: absolute;
    top: 0;
    right: 0;
    width: 24px;
    height: 833px;
    background: #f1f1f1;
    display: flex;
    flex-direction: column;
    align-items: center;
}

.vthumb {
    width: 21px;
    height: 737px;
    background: #c1c1c1;
    margin: 5px 0 auto;
}

.hscroll {
    position: absolute;
    left: 0;
    bottom: 0;
    width: 1896px;
    height: 22px;
    display: flex;
    align-items: center;
    background: #f1f1f1;
    border-bottom: 1px solid #fff;
}

.hthumb {
    width: 1836px;
    height: 21px;
    background: #c1c1c1;
    margin-left: 11px;
}

.arrow-left {
    width: 0;
    height: 0;
    margin-left: 8px;
    border-top: 5px solid transparent;
    border-bottom: 5px solid transparent;
    border-right: 6px solid #9a9a9a;
}

.arrow-right {
    width: 0;
    height: 0;
    margin-left: 18px;
    border-top: 5px solid transparent;
    border-bottom: 5px solid transparent;
    border-left: 6px solid #505050;
}

/* windows taskbar */

.taskbar {
    height: 60px;
    flex: none;
    display: flex;
    align-items: stretch;
    background: linear-gradient(to right, #1b1d24 0, #1b1d26 50%, #2e261c 70%, #2a241c 100%);
    color: #fff;
}

.task-start {
    width: 779px;
    display: flex;
    align-items: center;
    padding-left: 24px;
    gap: 43px;
}

.task-apps {
    display: flex;
}

.app {
    width: 75px;
    display: flex;
    align-items: center;
    justify-content: center;
    position: relative;
}

.app-open::after {
    content: "";
    position: absolute;
    left: 6px;
    right: 6px;
    bottom: 0;
    height: 3px;
    background: #76f0ff;
}

.app-active {
    background: #5a5349;
}

.app-active::after {
    left: 0;
    right: 0;
}

.zoom-badge {
    width: 36px;
    height: 36px;
    border-radius: 50%;
    background: #1a5fe8;
    color: #fff;
    font-size: 10px;
    font-weight: 600;
    line-height: 36px;
    text-align: center;
}

.tray {
    flex: 1;
    display: flex;
    align-items: center;
    padding-left: 223px;
    gap: 16px;
    border-right: 1px solid #777;
    margin-right: 8px;
}

.lang {
    font-size: 16.500px;
    font-weight: 300;
    margin-left: -1px;
}

.clock-tray {
    display: flex;
    flex-direction: column;
    align-items: center;
    gap: 7px;
    font-size: 17.400px;
    font-weight: 300;
    margin-left: 6px;
    line-height: 20px;
}

.action-center {
    position: relative;
    margin-left: 14px;
    height: 34px;
}

.action-count {
    position: absolute;
    left: 10px;
    top: 9px;
    width: 24px;
    height: 24px;
    border-radius: 50%;
    border: 1px solid #ccc;
    background: #333;
    font-size: 16px;
    line-height: 22px;
    text-align: center;
}
```
